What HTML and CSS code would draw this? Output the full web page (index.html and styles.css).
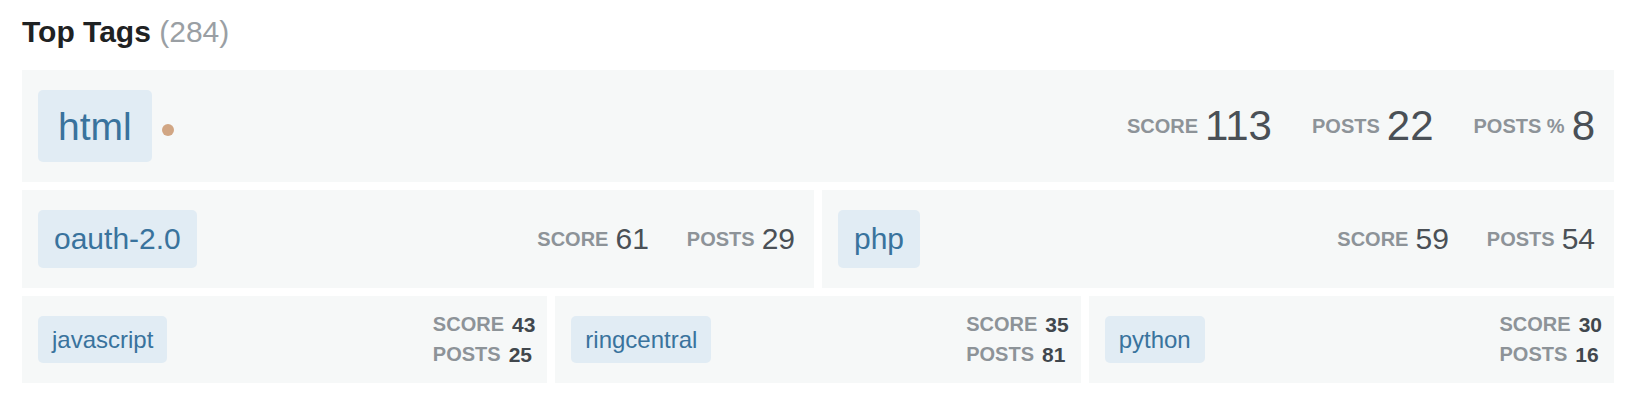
FILE: index.html
```html
<!DOCTYPE html>
<html lang="en">
<head>
<meta charset="utf-8">
<title>Top Tags</title>
<link rel="stylesheet" href="styles.css">
</head>
<body>
<section class="top-tags">
  <h3 class="title">Top Tags <span class="count">(284)</span></h3>
  <div class="tag-grid">
    <div class="card card-lg">
      <div class="tag-wrap">
        <a class="tag tag-lg">html</a>
        <span class="badge-dot"></span>
      </div>
      <div class="stats stats-lg">
        <div class="stat"><span class="label">Score</span><span class="num">113</span></div>
        <div class="stat"><span class="label">Posts</span><span class="num">22</span></div>
        <div class="stat"><span class="label">Posts %</span><span class="num">8</span></div>
      </div>
    </div>
    <div class="row row-2">
      <div class="card card-md">
        <a class="tag tag-md">oauth-2.0</a>
        <div class="stats stats-md">
          <div class="stat"><span class="label">Score</span><span class="num">61</span></div>
          <div class="stat"><span class="label">Posts</span><span class="num">29</span></div>
        </div>
      </div>
      <div class="card card-md">
        <a class="tag tag-md">php</a>
        <div class="stats stats-md">
          <div class="stat"><span class="label">Score</span><span class="num">59</span></div>
          <div class="stat"><span class="label">Posts</span><span class="num">54</span></div>
        </div>
      </div>
    </div>
    <div class="row row-3">
      <div class="card card-sm">
        <a class="tag tag-sm">javascript</a>
        <div class="stats stats-sm">
          <div class="stat"><span class="label">Score</span><span class="num">43</span></div>
          <div class="stat"><span class="label">Posts</span><span class="num">25</span></div>
        </div>
      </div>
      <div class="card card-sm">
        <a class="tag tag-sm">ringcentral</a>
        <div class="stats stats-sm">
          <div class="stat"><span class="label">Score</span><span class="num">35</span></div>
          <div class="stat"><span class="label">Posts</span><span class="num">81</span></div>
        </div>
      </div>
      <div class="card card-sm">
        <a class="tag tag-sm">python</a>
        <div class="stats stats-sm">
          <div class="stat"><span class="label">Score</span><span class="num">30</span></div>
          <div class="stat"><span class="label">Posts</span><span class="num">16</span></div>
        </div>
      </div>
    </div>
  </div>
</section>
</body>
</html>
```
FILE: styles.css
```css
html, body {
  margin: 0;
  padding: 0;
  background: #ffffff;
}

body {
  font-family: "Liberation Sans", Arial, Helvetica, sans-serif;
  color: #242729;
}

.top-tags {
  padding: 15px 22px 0;
}

.title {
  margin: 0 0 21px;
  font-size: 30px;
  line-height: 34px;
  font-weight: 700;
  color: #1f2223;
}

.title .count {
  font-weight: 400;
  color: #9a9fa4;
}

.tag-grid {
  display: flex;
  flex-direction: column;
  gap: 8px;
}

.row {
  display: grid;
  gap: 8px;
}

.row-2 {
  grid-template-columns: 1fr 1fr;
}

.row-3 {
  grid-template-columns: 1fr 1fr 1fr;
}

.card {
  background: #f6f8f8;
  display: flex;
  align-items: center;
  justify-content: space-between;
}

.card-lg {
  padding: 20px 19px 20px 16px;
}

.card-md {
  padding: 20px 19px 20px 16px;
}

.card-sm {
  padding: 14px 12px 14px 16px;
}

.tag-wrap {
  display: flex;
  align-items: center;
}

.tag {
  display: inline-block;
  background: #e1ecf4;
  color: #39739d;
  border-radius: 5px;
  text-decoration: none;
  white-space: nowrap;
}

.tag-lg {
  font-size: 39px;
  line-height: 42px;
  padding: 16px 20px 14px;
}

.tag-md {
  font-size: 30px;
  line-height: 34px;
  padding: 12px 16px;
}

.tag-sm {
  font-size: 24px;
  line-height: 27px;
  padding: 10px 14px;
  margin: 6px 0;
}

.badge-dot {
  width: 12px;
  height: 12px;
  border-radius: 50%;
  background: #d1a684;
  margin-left: 10px;
  margin-top: 8px;
}

.stats {
  display: flex;
  align-items: center;
}

.stat {
  display: flex;
  align-items: center;
  gap: 7px;
}

.label {
  font-size: 20px;
  font-weight: 700;
  text-transform: uppercase;
  color: #8d9398;
}

.num {
  color: #4a5056;
}

.stats-lg {
  gap: 40px;
}

.stats-lg .num {
  font-size: 42px;
  line-height: 46px;
}

.stats-md {
  gap: 38px;
}

.stats-md .num {
  font-size: 30px;
  line-height: 34px;
}

.stats-sm {
  flex-direction: column;
  align-items: flex-start;
  gap: 0;
}

.stats-sm .stat {
  gap: 8px;
  line-height: 29.5px;
}

.stats-sm .num {
  font-size: 21px;
  font-weight: 700;
  color: #41474d;
}
```
